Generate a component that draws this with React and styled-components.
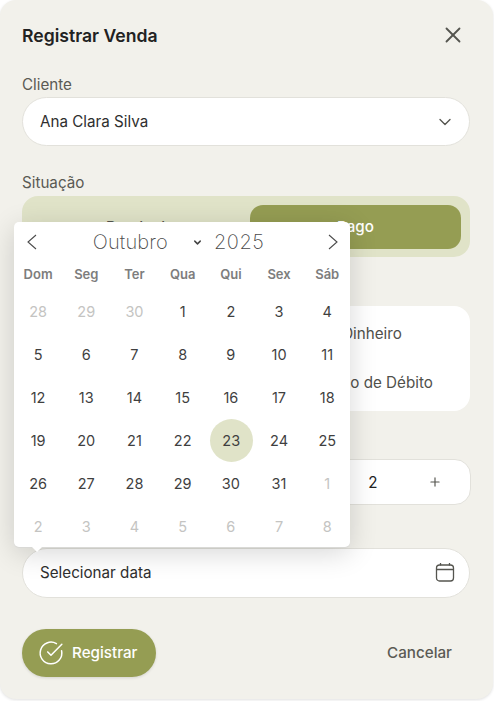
import React from 'react';
import styled, { createGlobalStyle } from 'styled-components';
import { X, ChevronDown, CircleCheckBig, Minus, Plus } from 'lucide-react';

const Global = createGlobalStyle`
  html, body { margin: 0; padding: 0; background: #fff; }
  body { font-family: Inter, "Liberation Sans", sans-serif; width: 494px; height: 701px; overflow: hidden; }
  * { box-sizing: border-box; }
`;

const Modal = styled.div`
  position: relative;
  width: 493px;
  height: 699px;
  background: #f2f1eb;
  border-radius: 16px;
  padding: 22px 22px 0;
  box-shadow: 0 1px 3px rgba(0,0,0,.12);
  overflow: hidden;
`;
const Header = styled.div`
  display: flex; align-items: center; justify-content: space-between; height: 26px;
  padding-right: 5px;
`;
const Title = styled.h2`
  margin: 0; font-size: 17.6px; font-weight: 600; color: #222;
`;
const Label = styled.div`
  font-size: 15.2px; line-height: 18px; color: #5a5a54; margin-top: ${p => p.$mt}px; margin-bottom: ${p => p.$mb}px;
`;
const Field = styled.div`
  width: 448px; height: ${p => p.$h}px; margin-top: ${p => p.$mt || 0}px; background: #fff; border: 1px solid #e2e1db; border-radius: 25px;
  display: flex; align-items: center; justify-content: space-between; padding: 0 14px ${p => p.$pb || 0}px 17px;
  font-size: 15.2px; color: #2f2f2f;
`;
const FieldIcon = styled.svg`
  flex: none;
`;
const Toggle = styled.div`
  width: 448px; height: 61px; background: #e0e3c8; border-radius: 16px; padding: 9px; display: grid; grid-template-columns: 219px 211px;
`;
const ToggleOption = styled.div`
  height: 44px; display: flex; align-items: center; justify-content: center; border-radius: 13px; font-size: 15.2px; font-weight: 500;
  padding-bottom: 2px;
  color: ${p => p.$on ? '#fff' : '#55554f'}; background: ${p => p.$on ? '#959d53' : 'transparent'};
`;
const PayCard = styled.div`
  width: 448px; height: 105px; margin-top: 49px; background: #fff; border-radius: 16px; display: grid; grid-auto-rows: 49px; padding-top: 3px;
`;
const PayRow = styled.div`
  display: grid; grid-template-columns: 1fr 196px; align-items: center; text-align: center; font-size: 15.2px; color: #50504b;
`;
const Stepper = styled.div`
  width: 449px; height: 46px; margin-top: 48px; background: #fff; border: 1px solid #e2e1db; border-radius: 16px;
  display: grid; grid-template-columns: 1fr 52px 71px; align-items: center; justify-items: center; font-size: 15.2px; color: #222;
`;
const Actions = styled.div`
  display: flex; justify-content: space-between; align-items: center; margin-top: 31px; padding-right: 19px;
`;
const Primary = styled.div`
  width: 134px; height: 48px; border-radius: 24px; background: #959d53; color: #fff; display: flex; align-items: center;
  padding: 0 0 1px 16px; gap: 8px; font-size: 15.2px; font-weight: 500; box-shadow: 0 1px 3px rgba(0,0,0,.12);
`;
const Cancel = styled.div`
  font-size: 15.2px; font-weight: 500; color: #5a5a54; padding-bottom: 2px;
`;
const Calendar = styled.div`
  position: absolute; left: 14px; top: 222px; width: 336px; height: 325px; background: #fff; border-radius: 5px;
  box-shadow: 0 1px 0 #d9d9d6, 0 6px 28px rgba(0,0,0,.16);
  &::after {
    content: ''; position: absolute; left: 18px; bottom: -5px; border: 5px solid transparent; border-bottom: 0; border-top-color: #fff;
  }
`;
const CalTop = styled.div`
  height: 40px; display: flex; align-items: center; justify-content: space-between; padding: 0 9px 0 10px;
`;
const Month = styled.div`
  display: flex; align-items: center; font-size: 20px; font-weight: 200; color: #4a4a4a; letter-spacing: .2px; margin-right: 8px;
`;
const Year = styled.span`
  margin-left: 11px; letter-spacing: .5px;
`;
const MonthCaret = styled(ChevronDown)`
  margin-left: 24px;
`;
const Weekdays = styled.div`
  display: grid; grid-template-columns: repeat(7, 48.2px); height: 24px; align-items: center; text-align: center;
  font-size: 13px; font-weight: 600; color: #7d7d7d;
`;
const Days = styled.div`
  display: grid; grid-template-columns: repeat(7, 48.2px); grid-auto-rows: 43px; margin-top: 4px;
`;
const Day = styled.div`
  display: flex; align-items: center; justify-content: center; font-size: 14.5px;
  color: ${p => p.$muted ? '#c4c4c2' : '#3f3f3f'};
  ${p => p.$sel && 'background:#e0e3c8;border-radius:50%;width:43px;height:43px;margin-left:3px;'}
`;

const days = [
  [28,1],[29,1],[30,1],[1],[2],[3],[4],[5],[6],[7],[8],[9],[10],[11],[12],[13],[14],[15],[16],[17],[18],
  [19],[20],[21],[22],[23,0,1],[24],[25],[26],[27],[28],[29],[30],[31],[1,1],[2,1],[3,1],[4,1],[5,1],[6,1],[7,1],[8,1],
];

export default function App() {
  return (
    <>
      <Global />
      <Modal>
        <Header>
          <Title>Registrar Venda</Title>
          <X size={26} color="#55554f" strokeWidth={1.7} />
        </Header>
        <Label $mt={28} $mb={3}>Cliente</Label>
        <Field $h={49}>Ana Clara Silva <ChevronDown size={20} color="#55554f" strokeWidth={1.6} /></Field>
        <Label $mt={28} $mb={4}>Situação</Label>
        <Toggle>
          <ToggleOption>Pendente</ToggleOption>
          <ToggleOption $on>Pago</ToggleOption>
        </Toggle>
        <PayCard>
          <PayRow><span /><span>Dinheiro</span></PayRow>
          <PayRow><span /><span>Cartão de Débito</span></PayRow>
        </PayCard>
        <Stepper><Minus size={14} /><span>2</span><Plus size={14} color="#55554f" /></Stepper>
        <Field $h={50} $mt={43} $pb={2}>
          Selecionar data
          <FieldIcon width="20" height="20" viewBox="0 0 20 20" fill="none" stroke="#55554f" strokeWidth="1.3">
            <rect x="1.5" y="3" width="17" height="16" rx="3" />
            <path d="M1.5 7.5H18.5M5.5 1V3.5M14.5 1V3.5" />
          </FieldIcon>
        </Field>
        <Actions>
          <Primary><CircleCheckBig size={26} strokeWidth={1.4} /> Registrar</Primary>
          <Cancel>Cancelar</Cancel>
        </Actions>
        <Calendar>
          <CalTop>
            <svg width="16" height="18" viewBox="0 0 16 18" fill="none" stroke="#4c4c4c" strokeWidth="1.1"><path d="M12 2 L4 9 L12 16" /></svg>
            <Month>Outubro <MonthCaret size={11} strokeWidth={3.2} color="#444" /><Year>2025</Year></Month>
            <svg width="16" height="18" viewBox="0 0 16 18" fill="none" stroke="#4c4c4c" strokeWidth="1.1"><path d="M4 2 L12 9 L4 16" /></svg>
          </CalTop>
          <Weekdays>{['Dom','Seg','Ter','Qua','Qui','Sex','Sáb'].map(d => <span key={d}>{d}</span>)}</Weekdays>
          <Days>{days.map(([n,m,s],i) => <Day key={i} $muted={!!m} $sel={!!s}>{n}</Day>)}</Days>
        </Calendar>
      </Modal>
    </>
  );
}
